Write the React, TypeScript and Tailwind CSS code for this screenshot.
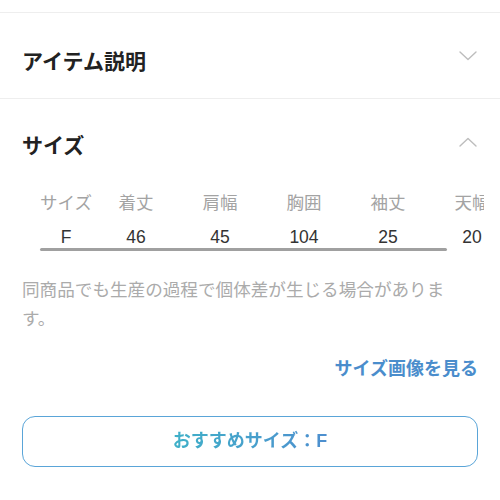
const font = { fontFamily: '"Liberation Sans", "Noto Sans CJK JP", sans-serif' };

const Chevron = ({ up }: { up?: boolean }) => (
  <svg width="18" height="10" viewBox="0 0 18 10" fill="none" className="shrink-0">
    <polyline
      points={up ? "1,9 9,1.5 17,9" : "1,1 9,8.5 17,1"}
      stroke="#bdbdbd"
      strokeWidth="1.4"
      strokeLinecap="round"
      strokeLinejoin="round"
    />
  </svg>
);

const headers = ["サイズ", "着丈", "肩幅", "胸囲", "袖丈", "天幅"];
const values = ["F", "46", "45", "104", "25", "20"];

export default function App() {
  return (
    <div className="w-[500px] h-[500px] bg-white overflow-hidden" style={font}>
      <div className="h-[13px] border-b border-[#eeeeee]" />

      <section className="h-[86px] border-b border-[#eeeeee] px-[22px] pt-[34px] flex justify-between items-start">
        <h2 className="text-[21px] leading-[30px] font-bold text-[#222]">アイテム説明</h2>
        <div className="mt-[4px] mr-[1px]">
          <Chevron />
        </div>
      </section>

      <section className="pt-[32px]">
        <div className="px-[22px] flex justify-between items-start">
          <h2 className="text-[21px] leading-[30px] font-bold text-[#222]">サイズ</h2>
          <div className="mt-[6px] mr-[1px]">
            <Chevron up />
          </div>
        </div>

        {/* horizontally scrolling size table, clipped on the right */}
        <div className="mt-[30px] w-[484px] overflow-hidden">
          <div className="flex pl-[38px] text-[17.5px] leading-[24px] text-[#a3a3a3]">
            {headers.map((h, i) => (
              <div key={h} className={`shrink-0 text-center whitespace-nowrap ${i === 0 ? "w-[56px]" : "w-[84px]"}`}>
                {h}
              </div>
            ))}
          </div>
          <div className="flex pl-[38px] mt-[11px] text-[17.5px] leading-[22px] text-[#333]">
            {values.map((v, i) => (
              <div key={i} className={`shrink-0 text-center ${i === 0 ? "w-[56px]" : "w-[84px]"}`}>
                {v}
              </div>
            ))}
          </div>
          <div className="ml-[40px] w-[407px] h-[3px] rounded-full bg-[#a0a0a0]" />
        </div>

        <p className="mt-[25px] pl-[22px] pr-[40px] text-[17.6px] leading-[29px] text-[#ababab]">
          同商品でも生産の過程で個体差が生じる場合があります。
        </p>

        <div className="mt-[23px] px-[22px] flex justify-end">
          <span className="text-[18px] leading-[24px] font-bold text-[#4a8dcc]">サイズ画像を見る</span>
        </div>

        <div className="mt-[35px] mx-[22px]">
          <button className="w-full h-[51px] rounded-[13px] border border-[#5aa5d8] flex items-center justify-center bg-white">
            <span className="text-[18px] font-bold bg-gradient-to-r from-[#3fb0c8] to-[#4d8fcf] bg-clip-text text-transparent">
              おすすめサイズ：F
            </span>
          </button>
        </div>
      </section>
    </div>
  );
}
